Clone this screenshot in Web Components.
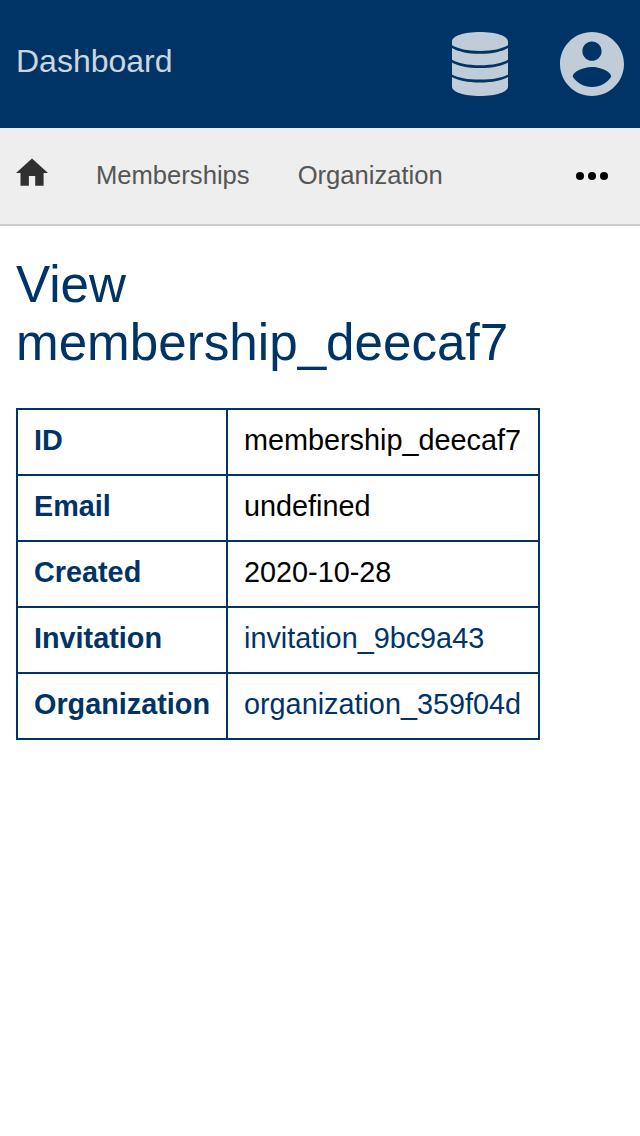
<!DOCTYPE html>
<html lang="en"><head><meta charset="utf-8"><title>Dashboard</title>
<style>html,body{margin:0;background:#fff;font-family:"Liberation Sans",Arial,sans-serif}</style></head>
<body><dash-app></dash-app>
<script>
const define=(name,html)=>{const t=document.createElement('template');t.innerHTML=html;customElements.define(name,class extends HTMLElement{constructor(){super();this.attachShadow({mode:'open'}).append(t.content.cloneNode(true));}});};

define('dash-header',`<style>
:host{display:flex;justify-content:space-between;box-sizing:border-box;height:128px;background:#003366;color:#ccd6e0;padding:32px 16px}
.title{font-size:32px;line-height:58px}
.icons{display:flex;gap:52px}
svg{width:64px;height:64px;fill:#c0ccd8;display:block}
.db{width:56px}
</style><div class="title"><slot></slot></div><div class="icons">
<svg class="db" viewBox="0 0 56 64"><path d="M0 9.500C0 4 12 0 28 0S56 4 56 9.500V13.300C50 16.800 41 19 28 19S6 16.800 0 13.300ZM0 16C6 19.500 15 21.800 28 21.800S50 19.500 56 16V27.700C50 31 41 33.200 28 33.200S6 31 0 27.700ZM0 30.400C6 33.700 15 36.100 28 36.100S50 33.700 56 30.400V42.400C50 45.600 41 47.600 28 47.600S6 45.600 0 42.400ZM0 45C6 48.300 15 50.500 28 50.500S50 48.300 56 45V54.500C56 60 44 64 28 64S0 60 0 54.500Z"/></svg>
<svg viewBox="2 2 20 20"><path d="M12 2C6.480 2 2 6.480 2 12s4.480 10 10 10 10-4.480 10-10S17.520 2 12 2zm0 3c1.660 0 3 1.340 3 3s-1.340 3-3 3-3-1.340-3-3 1.340-3 3-3zm0 14.200c-2.500 0-4.710-1.280-6-3.220.03-1.990 4-3.080 6-3.080 1.990 0 5.970 1.090 6 3.080-1.290 1.940-3.500 3.220-6 3.220z"/></svg></div>`);

define('dash-nav',`<style>
:host{display:flex;align-items:center;box-sizing:border-box;height:98px;padding:0 32px 2px 16px;background:#eee;border-bottom:2px solid #ccc;color:#555;font-size:25.600px}
.home{width:32px;height:28px;fill:#303030;margin:0 48px 6px 0}
.links{display:flex;gap:48px;flex:1}
.more{width:32px;height:8px;fill:#000;margin-top:2px}
</style><svg class="home" viewBox="0 0 32 28"><path d="M16 .4 32 15H27.600V27.700H19.200V18H12.900V27.700H4.500V15H0z"/></svg><div class="links"><slot></slot></div><svg class="more" viewBox="0 0 32 8"><circle cx="4" cy="4" r="4"/><circle cx="16" cy="4" r="4"/><circle cx="28" cy="4" r="4"/></svg>`);

define('dash-heading',`<style>:host{display:block;color:#003366}
h1{margin:0;font-weight:400;font-size:51.200px;line-height:58px}</style><h1><slot></slot></h1>`);

define('detail-table',`<style>:host{display:grid;grid-template-columns:210px 312px;width:max-content;font-size:28.800px;border:solid #003366;border-width:2px 0 0 2px;margin-top:36px}</style><slot></slot>`);

define('detail-row',`<style>:host{display:contents}
div{box-sizing:border-box;height:66px;padding:0 16px;line-height:60px;border:solid #003366;border-width:0 2px 2px 0}
.key{font-weight:700;color:#003366;white-space:nowrap}.value{color:#000}
::slotted(a){color:#003366;text-decoration:none}</style><div class="key"><slot name="key"></slot></div><div class="value"><slot></slot></div>`);

define('dash-app',`<style>:host{display:block}main{padding:30px 16px}</style>
<dash-header>Dashboard</dash-header>
<dash-nav><span>Memberships</span><span>Organization</span></dash-nav>
<main><dash-heading>View<br>membership_deecaf7</dash-heading>
<detail-table>
<detail-row><span slot="key">ID</span>membership_deecaf7</detail-row>
<detail-row><span slot="key">Email</span>undefined</detail-row>
<detail-row><span slot="key">Created</span>2020-10-28</detail-row>
<detail-row><span slot="key">Invitation</span><a href="#">invitation_9bc9a43</a></detail-row>
<detail-row><span slot="key">Organization</span><a href="#">organization_359f04d</a></detail-row>
</detail-table></main>`);
</script></body></html>
